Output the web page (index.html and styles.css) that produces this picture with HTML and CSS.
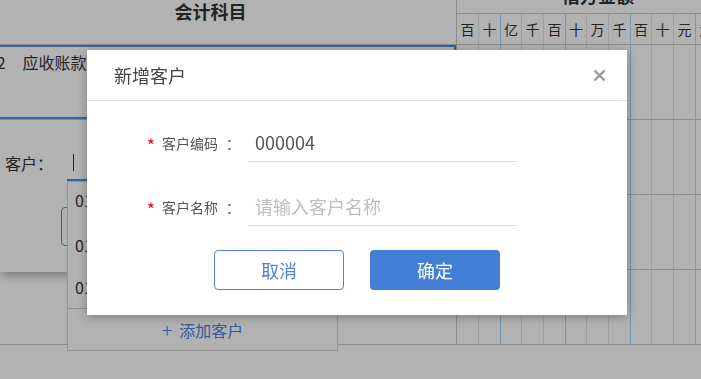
FILE: index.html
```html
<!DOCTYPE html>
<html lang="zh-CN">
  <head>
    <meta charset="UTF-8" />
    <meta name="viewport" content="width=device-width, initial-scale=1.0" />
    <title>凭证录入 – 新增客户</title>
    <link rel="stylesheet" href="styles.css">
  </head>
  <body>
    <!-- voucher grid behind the dialog -->
    <div class="sheet">
      <div class="head">
        <div class="subject-head">会计科目</div>
        <div class="amount-head">
          <div class="amount-title">借方金额</div>
          <div class="digits">
            <span>百</span><span>十</span><span>亿</span><span>千</span><span>百</span><span>十</span><span>万</span><span>千</span><span>百</span><span>十</span><span>元</span><span>角</span><span>分</span>
          </div>
        </div>
      </div>
      <div class="row">
        <div class="subject editing"><span class="code">1122</span>应收账款</div>
        <div class="digits"><span></span><span></span><span></span><span></span><span></span><span></span><span></span><span></span><span></span><span></span><span></span><span></span><span></span></div>
      </div>
      <div class="row">
        <div class="subject"></div>
        <div class="digits"><span></span><span></span><span></span><span></span><span></span><span></span><span></span><span></span><span></span><span></span><span></span><span></span><span></span></div>
      </div>
      <div class="row">
        <div class="subject"></div>
        <div class="digits"><span></span><span></span><span></span><span></span><span></span><span></span><span></span><span></span><span></span><span></span><span></span><span></span><span></span></div>
      </div>
      <div class="row">
        <div class="subject"></div>
        <div class="digits"><span></span><span></span><span></span><span></span><span></span><span></span><span></span><span></span><span></span><span></span><span></span><span></span><span></span></div>
      </div>
    </div>

    <!-- auxiliary picker opened under the cell -->
    <div class="aux-panel">
      <label class="aux-label">客户：</label>
      <div class="aux-input"><i class="caret"></i></div>
      <button class="aux-btn"></button>
    </div>
    <ul class="aux-list">
      <li>010001 华东商贸</li>
      <li>010002 远航科技</li>
      <li>010003 恒信实业</li>
      <li class="aux-add"><span class="plus">+</span>添加客户</li>
    </ul>

    <div class="mask"></div>

    <div class="dialog">
      <div class="dialog-header">
        <h2 class="dialog-title">新增客户</h2>
        <svg class="dialog-close" width="13" height="13" viewBox="0 0 13 13">
          <path d="M1.5 1.5l10 10M11.5 1.5l-10 10" stroke="#999" stroke-width="2.4" />
        </svg>
      </div>
      <form class="dialog-body">
        <div class="form-row">
          <label class="form-label"><em>*</em>客户编码<span class="colon">：</span></label>
          <input class="form-input" type="text" value="000004" />
        </div>
        <div class="form-row">
          <label class="form-label"><em>*</em>客户名称<span class="colon">：</span></label>
          <input class="form-input" type="text" placeholder="请输入客户名称" />
        </div>
        <div class="form-actions">
          <button type="button" class="btn btn-ghost">取消</button>
          <button type="submit" class="btn btn-primary">确定</button>
        </div>
      </form>
    </div>
  </body>
</html>
```

FILE: styles.css
```css
/* ------------ Global ------------ */
* {
  margin: 0;
  padding: 0;
  box-sizing: border-box;
}
body {
  font-family: "Noto Sans CJK SC", "Liberation Sans", sans-serif;
  background: #fff;
  color: #333;
  width: 701px;
  height: 379px;
  overflow: hidden;
  position: relative;
}

/* ------------ Voucher sheet ------------ */
.sheet {
  margin: -22px 0 0 -35px;
  width: 800px;
}
.head,
.row {
  display: flex;
  border-bottom: 1px solid #c8c8c8;
}
.head {
  height: 67px;
}
.row {
  height: 75px;
}
.subject-head,
.subject {
  width: 492px;
  flex-shrink: 0;
  border-right: 1px solid #c8c8c8;
}
.subject-head {
  display: flex;
  align-items: center;
  justify-content: center;
  font-size: 18px;
  font-weight: 700;
}
.amount-head {
  display: flex;
  flex-direction: column;
}
.amount-title {
  height: 36px;
  border-bottom: 1px solid #c8c8c8;
  text-align: center;
  font-size: 18px;
  font-weight: 700;
  line-height: 35px;
}
.digits {
  display: flex;
  flex: 1;
}
.digits span {
  width: 22px;
  border-right: 1px solid #e4e4e4;
  display: flex;
  align-items: center;
  justify-content: center;
  font-size: 14px;
  color: #333;
}
.digits span:nth-child(3n) {
  width: 21px;
}
.digits span:nth-child(3n + 2) {
  border-right-color: #a6d8ff;
}
.digits span:nth-child(11) {
  border-right-color: #f2c6c6;
}
.subject.editing {
  box-shadow: inset 0 0 0 2px #4d8fe8;
  padding: 5px 0 0 5px;
  font-size: 16px;
  line-height: 24px;
}
.code {
  margin-right: 17px;
}

/* ------------ Auxiliary picker ------------ */
.aux-panel {
  position: absolute;
  top: 120px;
  left: 0;
  width: 530px;
  height: 152px;
  background: #fff;
  box-shadow: 0 6px 8px -2px rgba(0, 0, 0, 0.3);
  display: flex;
  align-items: flex-start;
  padding: 26px 0 0 5px;
}
.aux-label {
  width: 62px;
  font-size: 16px;
  line-height: 35px;
}
.aux-input {
  width: 220px;
  height: 35px;
  border-bottom: 2px solid #4d8fe8;
  display: flex;
  align-items: center;
  padding-left: 6px;
}
.caret {
  display: block;
  width: 1px;
  height: 17px;
  background: #333;
}
.aux-btn {
  position: absolute;
  left: 61px;
  top: 87px;
  width: 90px;
  height: 39px;
  border: 1px solid #4d8fe8;
  border-radius: 4px;
  background: #fff;
}
.aux-list {
  position: absolute;
  top: 181px;
  left: 67px;
  width: 271px;
  height: 170px;
  list-style: none;
  background: #fff;
  border: 1px solid #d4d4d4;
}
.aux-list li {
  height: 42px;
  line-height: 42px;
  padding-left: 7px;
  font-size: 16px;
  color: #333;
  white-space: nowrap;
}
.aux-list li:first-child {
  line-height: 36px;
}
.aux-list .aux-add {
  height: 43px;
  border-top: 1px solid #d4d4d4;
  padding: 0;
  text-align: center;
  color: #4a84dc;
}
.plus {
  font-size: 20px;
  font-weight: 300;
  margin-right: 7px;
  vertical-align: -1px;
}

/* ------------ Dialog ------------ */
.mask {
  position: fixed;
  inset: 0;
  background: rgba(0, 0, 0, 0.3);
}
.dialog {
  position: absolute;
  left: 87px;
  top: 50px;
  width: 540px;
  height: 265px;
  background: #fff;
  box-shadow: 0 2px 10px rgba(0, 0, 0, 0.3);
}
.dialog-header {
  height: 51px;
  display: flex;
  align-items: center;
  justify-content: space-between;
  padding: 0 21px 0 27px;
  border-bottom: 1px solid #e3e3e3;
}
.dialog-title {
  font-size: 18px;
  font-weight: 400;
  color: #444;
}
.dialog-body {
  padding: 22px 0 25px;
  display: flex;
  flex-direction: column;
  gap: 25px;
}
.form-row {
  display: flex;
  align-items: center;
  padding-left: 60px;
}
.form-label {
  width: 94px;
  margin-right: 7px;
  font-size: 14px;
  color: #555;
  white-space: nowrap;
  display: flex;
  align-items: center;
}
.form-label em {
  font-style: normal;
  font-size: 17px;
  line-height: 1;
  color: #f00;
  margin-right: 7px;
  position: relative;
  top: 2px;
}
.colon {
  margin-left: 8px;
}
.form-input {
  width: 269px;
  height: 39px;
  border: none;
  border-bottom: 1px solid #dadada;
  padding-left: 7px;
  font-family: inherit;
  font-size: 18px;
  color: #555;
  outline: none;
}
.form-input::placeholder {
  color: #bdbdbd;
}
.form-actions {
  display: flex;
  justify-content: center;
  gap: 26px;
  margin-top: -1px;
}
.btn {
  width: 130px;
  height: 40px;
  border-radius: 4px;
  font-family: inherit;
  font-size: 18px;
  cursor: pointer;
}
.btn-ghost {
  background: #fff;
  border: 1px solid #4a84dc;
  color: #4a84dc;
}
.btn-primary {
  background: #437fd6;
  border: none;
  color: #fff;
}
```
